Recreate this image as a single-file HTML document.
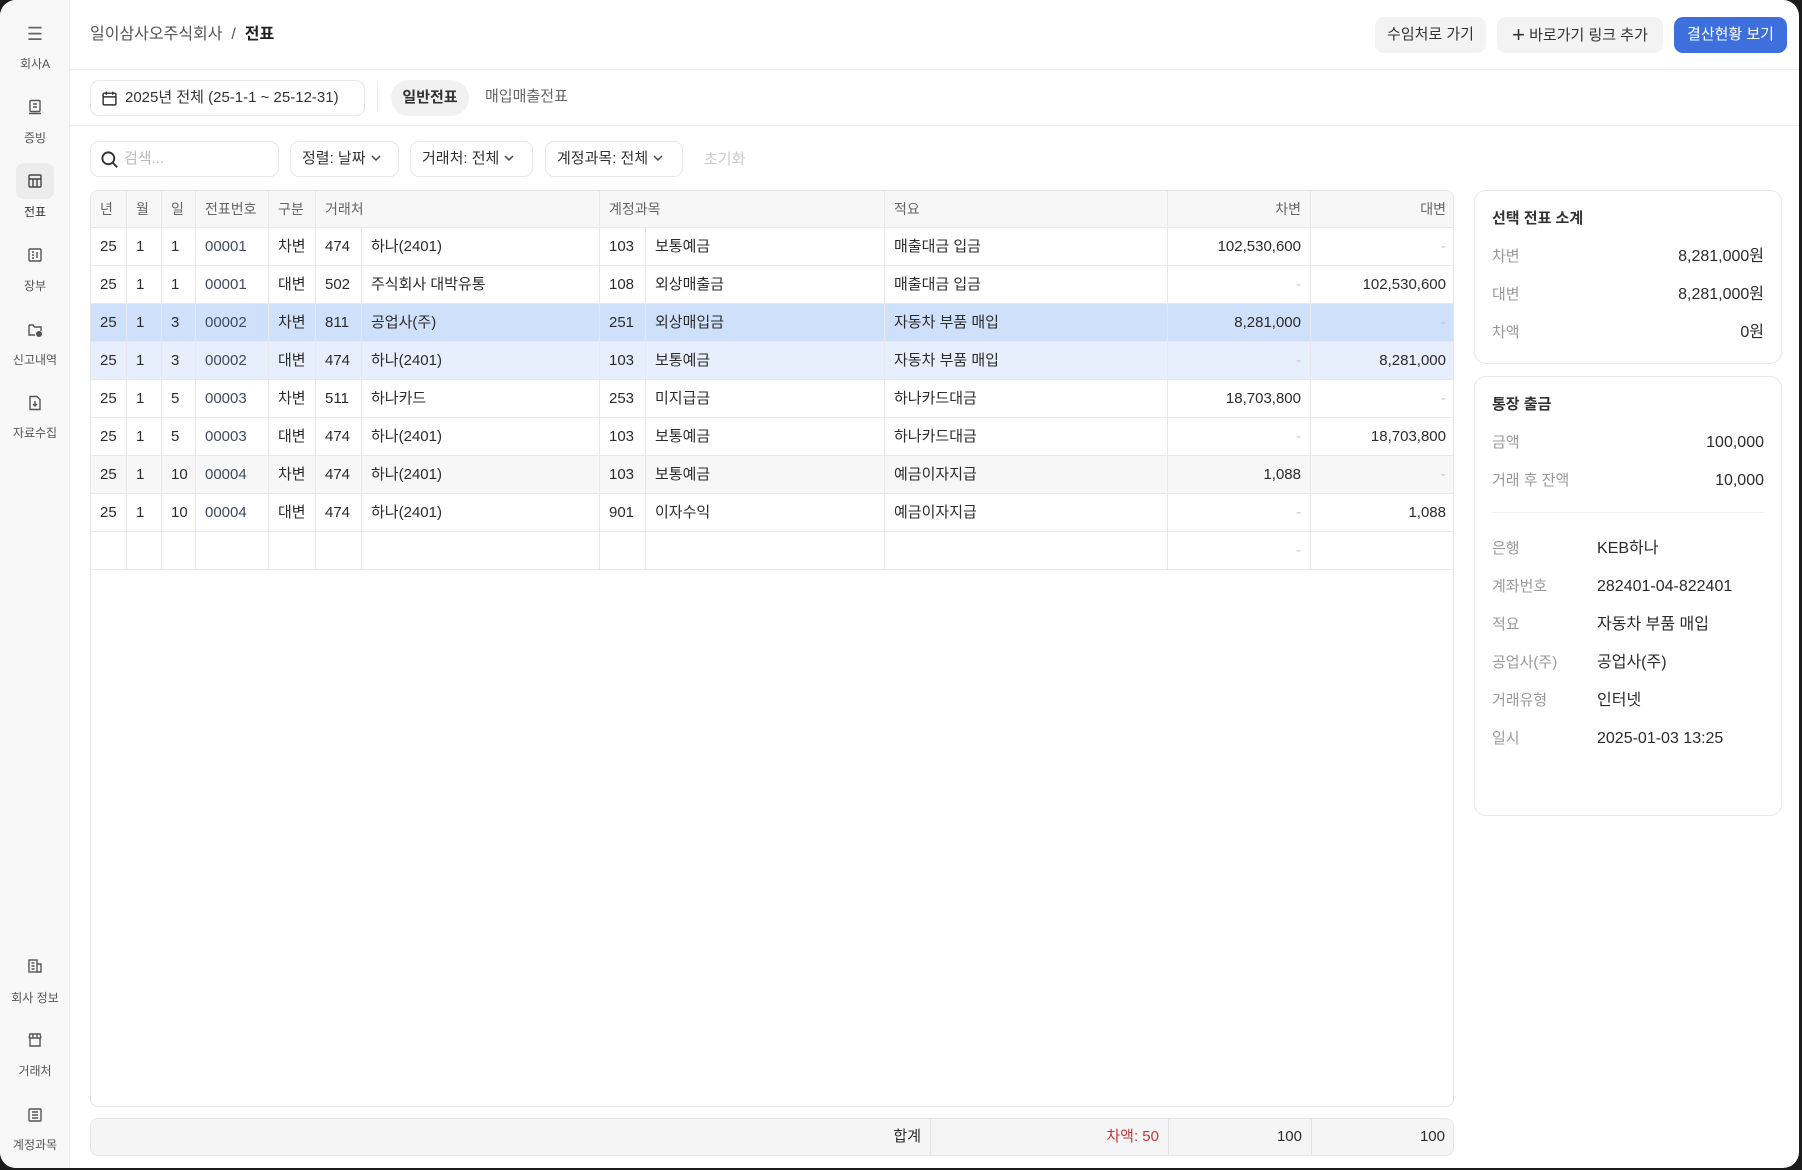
<!DOCTYPE html>
<html><head><meta charset="utf-8">
<style>
*{box-sizing:border-box;margin:0;padding:0}
body{width:1802px;height:1170px;background:#1c1c1c;font-family:"Liberation Sans","Noto Sans CJK KR",sans-serif;color:#2b2b2b;overflow:hidden;position:relative}
.app{position:absolute;left:0;top:0;width:1799px;height:1168px;background:#fff;border-radius:16px;overflow:hidden}
.side{position:absolute;left:0;top:0;width:70px;height:100%;background:#f8f8f8;border-right:1px solid #ececec}
.si{position:absolute;left:0;width:70px;text-align:center;font-size:12px;color:#555;line-height:16px}
.ic{position:absolute;left:27px;width:16px;height:16px}
.abs{position:absolute}
.btn{position:absolute;height:36px;border-radius:9px;font-size:15px;line-height:36px;text-align:center;color:#333;background:#f3f3f3}
.chip{position:absolute;height:36px;border:1px solid #e8e8e8;border-radius:9px;font-size:15px;line-height:34px;color:#333;background:#fff}
.chev{display:inline-block;vertical-align:1px;margin-left:4px}
.tbl{position:absolute;left:90px;top:190px;width:1364px;height:917px;border:1px solid #e6e6e6;border-radius:8px;overflow:hidden}
.row{position:absolute;left:0;width:1364px;height:38px;border-bottom:1px solid #e8e8e8;font-size:15px;line-height:37px;color:#2b2b2b}
.c{position:absolute;top:0;height:100%;padding:0 9px;white-space:nowrap;border-right:1px solid #e8e8e8}
.r{text-align:right}
.dash{color:#c8c8c8}
.hd{background:#f7f7f7;color:#666;font-size:14px;height:37px}
.card{position:absolute;left:1474px;width:308px;border:1px solid #e8e8e8;border-radius:12px;background:#fff}
.lab,.val,.v2{line-height:20px;height:20px;white-space:nowrap}
.lab{position:absolute;left:17px;font-size:15px;color:#9a9a9a}
.val{position:absolute;right:17px;font-size:16px;color:#2b2b2b}
.v2{position:absolute;left:122px;font-size:16px;color:#2b2b2b}
</style></head><body>
<div class="app">
<div class="side">
 <div class="si" style="top:24px;font-size:18px;line-height:20px;color:#666">☰</div>
 <div class="si" style="top:56px">회사A</div>
 <svg class="ic" style="top:99px" viewBox="0 0 16 16" fill="none" stroke="#555" stroke-width="1.4"><rect x="3" y="1.5" width="10" height="11" rx="1"/><path d="M6 5h4M6 8h4M2 14.5h12"/></svg>
 <div class="si" style="top:130px">증빙</div>
 <div class="abs" style="left:16px;top:163px;width:38px;height:36px;background:#ececec;border-radius:8px"></div>
 <svg class="ic" style="top:173px" viewBox="0 0 16 16" fill="none" stroke="#444" stroke-width="1.4"><rect x="2" y="2" width="12" height="12" rx="1"/><path d="M2 6h12M6 6v8M10 6v8"/></svg>
 <div class="si" style="top:204px;color:#333">전표</div>
 <svg class="ic" style="top:247px" viewBox="0 0 16 16" fill="none" stroke="#555" stroke-width="1.4"><rect x="2" y="2" width="12" height="12" rx="1"/><path d="M5 5h2M5 8h2M5 11h2M10 5v6"/></svg>
 <div class="si" style="top:278px">장부</div>
 <svg class="ic" style="top:322px" viewBox="0 0 16 16" fill="none" stroke="#555" stroke-width="1.4"><path d="M2 3h4l1.5 2H14v4M2 3v10h6"/><circle cx="12" cy="12" r="2.3" fill="#555"/></svg>
 <div class="si" style="top:352px">신고내역</div>
 <svg class="ic" style="top:395px" viewBox="0 0 16 16" fill="none" stroke="#555" stroke-width="1.4"><path d="M3 1.5h7l3 3v10H3z"/><path d="M8 6v5M6 9l2 2 2-2"/></svg>
 <div class="si" style="top:425px">자료수집</div>
 <svg class="ic" style="top:958px" viewBox="0 0 16 16" fill="none" stroke="#555" stroke-width="1.4"><rect x="2" y="2" width="8" height="12"/><path d="M10 6h4v8h-4M4.5 5h3M4.5 8h3M4.5 11h3"/></svg>
 <div class="si" style="top:990px">회사 정보</div>
 <svg class="ic" style="top:1032px" viewBox="0 0 16 16" fill="none" stroke="#555" stroke-width="1.4"><path d="M2 6l1-4h10l1 4M2 6h12M3 6v8h10V6M6 2v4M10 2v4"/></svg>
 <div class="si" style="top:1063px">거래처</div>
 <svg class="ic" style="top:1107px" viewBox="0 0 16 16" fill="none" stroke="#555" stroke-width="1.4"><rect x="2" y="2" width="12" height="12" rx="1"/><path d="M5 5h6M5 8h6M5 11h6"/></svg>
 <div class="si" style="top:1137px">계정과목</div>
</div>

<div class="abs" style="left:90px;top:24px;font-size:16px;line-height:22px;color:#555">일이삼사오주식회사 &nbsp;/&nbsp; <b style="color:#222">전표</b></div>
<div class="btn" style="left:1375px;top:17px;width:111px">수임처로 가기</div>
<div class="btn" style="left:1497px;top:17px;width:166px"><span style="font-size:22px;vertical-align:-2px">+</span> 바로가기 링크 추가</div>
<div class="btn" style="left:1674px;top:17px;width:113px;background:#3e70dd;color:#fff">결산현황 보기</div>
<div class="abs" style="left:70px;top:69px;width:1730px;height:1px;background:#efefef"></div>

<div class="chip" style="left:90px;top:80px;width:275px;height:36px;padding-left:10px">
 <svg style="position:absolute;left:10px;top:9px" width="17" height="17" viewBox="0 0 16 16" fill="none" stroke="#333" stroke-width="1.4"><rect x="2" y="3" width="12" height="11" rx="1"/><path d="M2 6.5h12M5 1.5v3M11 1.5v3"/></svg>
 <span style="margin-left:24px">2025년 전체 (25-1-1 ~ 25-12-31)</span></div>
<div class="abs" style="left:377px;top:84px;width:1px;height:28px;background:#eee"></div>
<div class="btn" style="left:391px;top:80px;width:78px;border-radius:18px;background:#f1f1f1;font-weight:bold;color:#333">일반전표</div>
<div class="abs" style="left:485px;top:87px;font-size:15px;line-height:20px;color:#666">매입매출전표</div>
<div class="abs" style="left:70px;top:125px;width:1730px;height:1px;background:#efefef"></div>

<div class="chip" style="left:90px;top:141px;width:189px">
 <svg style="position:absolute;left:9px;top:8px" width="19" height="19" viewBox="0 0 16 16" fill="none" stroke="#333" stroke-width="1.6"><circle cx="7" cy="7" r="5"/><path d="M10.5 10.5L14.5 14.5"/></svg>
 <span style="margin-left:33px;color:#bbb">검색...</span></div>
<div class="chip" style="left:290px;top:141px;width:109px;padding-left:11px">정렬: 날짜<svg class="chev" width="12" height="8" viewBox="0 0 12 8" fill="none" stroke="#444" stroke-width="1.5"><path d="M2 2l4 4 4-4"/></svg></div>
<div class="chip" style="left:410px;top:141px;width:123px;padding-left:11px">거래처: 전체<svg class="chev" width="12" height="8" viewBox="0 0 12 8" fill="none" stroke="#444" stroke-width="1.5"><path d="M2 2l4 4 4-4"/></svg></div>
<div class="chip" style="left:545px;top:141px;width:138px;padding-left:11px">계정과목: 전체<svg class="chev" width="12" height="8" viewBox="0 0 12 8" fill="none" stroke="#444" stroke-width="1.5"><path d="M2 2l4 4 4-4"/></svg></div>
<div class="abs" style="left:704px;top:150px;font-size:15px;line-height:20px;color:#ccc">초기화</div>

<div class="tbl">
 <div class="row hd" style="top:0">
  <div class="c" style="left:0;width:36px">년</div><div class="c" style="left:36px;width:35px">월</div><div class="c" style="left:71px;width:34px">일</div><div class="c" style="left:105px;width:73px">전표번호</div><div class="c" style="left:178px;width:47px">구분</div><div class="c" style="left:225px;width:284px">거래처</div><div class="c" style="left:509px;width:285px">계정과목</div><div class="c" style="left:794px;width:283px">적요</div><div class="c r" style="left:1077px;width:143px">차변</div><div class="c r" style="left:1220px;width:144px;border:0">대변</div>
 </div>
 <div id="rows"></div>
</div>
<script>
var d=[["25","1","1","00001","차변","474","하나(2401)","103","보통예금","매출대금 입금","102,530,600","-",""],
["25","1","1","00001","대변","502","주식회사 대박유통","108","외상매출금","매출대금 입금","-","102,530,600",""],
["25","1","3","00002","차변","811","공업사(주)","251","외상매입금","자동차 부품 매입","8,281,000","-","#cfe0fa"],
["25","1","3","00002","대변","474","하나(2401)","103","보통예금","자동차 부품 매입","-","8,281,000","#e7effc"],
["25","1","5","00003","차변","511","하나카드","253","미지급금","하나카드대금","18,703,800","-",""],
["25","1","5","00003","대변","474","하나(2401)","103","보통예금","하나카드대금","-","18,703,800",""],
["25","1","10","00004","차변","474","하나(2401)","103","보통예금","예금이자지급","1,088","-","#f7f7f7"],
["25","1","10","00004","대변","474","하나(2401)","901","이자수익","예금이자지급","-","1,088",""],
["","","","","","","","","","","-","",""]];
var L=[[0,36],[36,35],[71,34],[105,73],[178,47],[225,46],[271,238],[509,46],[555,239],[794,283],[1077,143],[1220,144]];
var h="";
d.forEach(function(r,i){h+='<div class="row" style="top:'+(37+i*38)+'px;background:'+(r[12]||'#fff')+'">';
for(var j=0;j<12;j++){var cls="c"+(j>=10?" r":"")+(r[j]=="-"?" dash":"");var st="left:"+L[j][0]+"px;width:"+L[j][1]+"px"+(j==11?";border:0":"")+(j==3?";color:#3f4a60":"");
h+='<div class="'+cls+'" style="'+st+'">'+r[j]+'</div>';}h+='</div>';});
document.getElementById("rows").innerHTML=h;
</script>

<div class="abs" style="left:90px;top:1118px;width:1364px;height:38px;background:#f5f5f5;border:1px solid #e6e6e6;border-radius:8px;font-size:15px;line-height:36px">
 <div class="abs" style="right:532px;top:0">합계</div>
 <div class="abs" style="left:839px;top:0;width:1px;height:36px;background:#e2e2e2"></div>
 <div class="abs" style="left:839px;width:238px;text-align:right;padding-right:9px;color:#c0393b">차액: 50</div>
 <div class="abs" style="left:1077px;top:0;width:1px;height:36px;background:#e2e2e2"></div>
 <div class="abs" style="left:1077px;width:143px;text-align:right;padding-right:9px">100</div>
 <div class="abs" style="left:1220px;top:0;width:1px;height:36px;background:#e2e2e2"></div>
 <div class="abs" style="left:1220px;width:143px;text-align:right;padding-right:9px">100</div>
</div>

<div class="card" style="top:190px;height:174px">
 <div class="abs" style="left:17px;top:18px;font-size:15px;line-height:20px;font-weight:bold;color:#333">선택 전표 소계</div>
 <div class="lab" style="top:56px">차변</div><div class="val" style="top:56px">8,281,000원</div>
 <div class="lab" style="top:94px">대변</div><div class="val" style="top:94px">8,281,000원</div>
 <div class="lab" style="top:132px">차액</div><div class="val" style="top:132px">0원</div>
</div>
<div class="card" style="top:376px;height:440px">
 <div class="abs" style="left:17px;top:18px;font-size:15px;line-height:20px;font-weight:bold;color:#333">통장 출금</div>
 <div class="lab" style="top:56px">금액</div><div class="val" style="top:56px">100,000</div>
 <div class="lab" style="top:94px">거래 후 잔액</div><div class="val" style="top:94px">10,000</div>
 <div class="abs" style="left:17px;right:17px;top:135px;height:1px;background:#efefef"></div>
 <div class="lab" style="top:162px">은행</div><div class="v2" style="top:162px">KEB하나</div>
 <div class="lab" style="top:200px">계좌번호</div><div class="v2" style="top:200px">282401-04-822401</div>
 <div class="lab" style="top:238px">적요</div><div class="v2" style="top:238px">자동차 부품 매입</div>
 <div class="lab" style="top:276px">공업사(주)</div><div class="v2" style="top:276px">공업사(주)</div>
 <div class="lab" style="top:314px">거래유형</div><div class="v2" style="top:314px">인터넷</div>
 <div class="lab" style="top:352px">일시</div><div class="v2" style="top:352px">2025-01-03 13:25</div>
</div>
</div>
</body></html>
